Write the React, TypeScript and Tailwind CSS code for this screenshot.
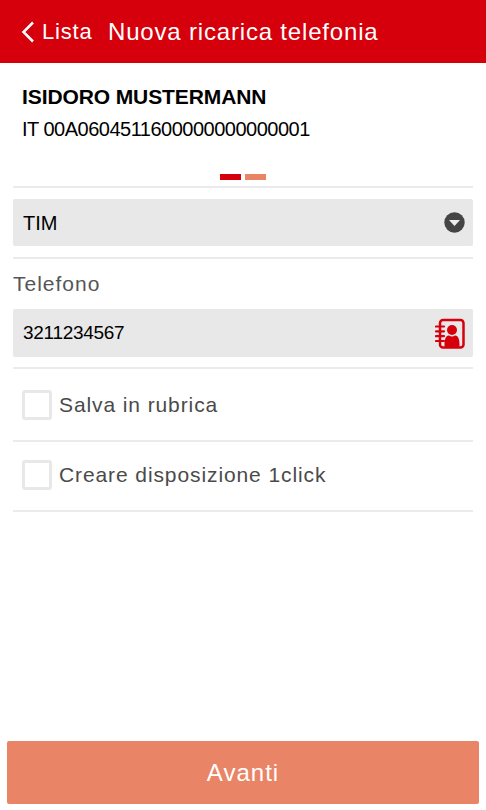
import React from 'react';

const Divider = () => <div className="h-0.5 bg-[#ebebeb]" />;

const CheckRow = ({ label, className }: { label: string; className: string }) => (
  <label className={`flex items-center pl-[9px] ${className}`}>
    <span className="h-[30px] w-[30px] rounded-[3px] border-[3px] border-[#e8e8e8] bg-white" />
    <span className="ml-[7px] whitespace-nowrap text-[21px] leading-[30px] tracking-[0.9px] text-[#4a4a4a]">{label}</span>
  </label>
);

export default function App() {
  return (
    <div className="flex h-[810px] w-[486px] flex-col bg-white font-['Liberation_Sans',Arial,sans-serif] text-black">
      {/* Header */}
      <header className="flex h-[63px] shrink-0 items-center bg-[#d5000c] text-white">
        <svg className="ml-[21px] h-[22px] w-[14px]" viewBox="0 0 14 22" fill="none" stroke="currentColor" strokeWidth="2.5">
          <path d="M12 1.5 2.5 11 12 20.5" />
        </svg>
        <span className="ml-[7px] w-[66px] whitespace-nowrap text-[22px] tracking-[0.8px]">Lista</span>
        <h1 className="whitespace-nowrap text-2xl tracking-[0.82px]">Nuova ricarica telefonia</h1>
      </header>

      <main className="flex grow flex-col px-[13px]">
        {/* Account */}
        <section className="h-[111px] pl-[9px] pt-[18px]">
          <p className="whitespace-nowrap text-[21px] leading-[32px] font-bold tracking-[-0.1px]">ISIDORO MUSTERMANN</p>
          <p className="whitespace-nowrap text-[20px] leading-[32px] tracking-[-0.5px]">IT 00A0604511600000000000001</p>
        </section>
        <div className="flex h-3 gap-1 pl-[207px]">
          <span className="h-[6px] w-[21px] bg-[#d5000c]" />
          <span className="h-[6px] w-[21px] bg-[#ea8467]" />
        </div>
        <Divider />

        {/* Operator */}
        <div className="mt-[11px] mb-[11px] flex h-[47px] items-center justify-between rounded-xs bg-[#e8e8e8] pl-[10px] pr-2">
          <span className="text-[20px]">TIM</span>
          <svg className="h-[21px] w-[21px]" viewBox="0 0 21 21">
            <circle cx="10.5" cy="10.5" r="10.2" fill="#444" />
            <path d="M5 8h11l-5.5 6z" fill="#eee" />
          </svg>
        </div>
        <Divider />

        {/* Phone number */}
        <p className="mt-[10px] h-[40px] text-[21px] leading-[30px] tracking-[1px] text-[#555]">Telefono</p>
        <div className="mb-[10px] flex h-[48px] items-center justify-between rounded-xs bg-[#e8e8e8] pl-[10px] pr-2">
          <span className="text-[19px] tracking-[-0.3px]">3211234567</span>
          <svg className="h-[31px] w-[30px]" viewBox="0 0 30 31" fill="none" stroke="#d5000c" strokeWidth="2.5">
            <rect x="5" y="2" width="23.5" height="27.5" rx="3" />
            <path d="M1 8.5h8M1 13.3h8M1 18.1h8M1 23h8" strokeLinecap="round" strokeWidth="2.2" />
            <circle cx="17" cy="12" r="5" fill="#d5000c" stroke="none" />
            <path d="M9.5 29v-3c0-6 2-8.500 4.500-8.500q3 2 6 0c2.500 0 4.500 2.500 4.500 8.500v3z" fill="#d5000c" stroke="none" />
          </svg>
        </div>
        <Divider />

        <CheckRow label="Salva in rubrica" className="h-[71px]" />
        <Divider />
        <CheckRow label="Creare disposizione 1click" className="h-[68px] pb-[3px]" />
        <Divider />
      </main>

      <button className="mx-[7px] mb-[6px] h-[63px] shrink-0 rounded-xs bg-[#ea8467] text-2xl tracking-[1px] text-white">
        Avanti
      </button>
    </div>
  );
}
